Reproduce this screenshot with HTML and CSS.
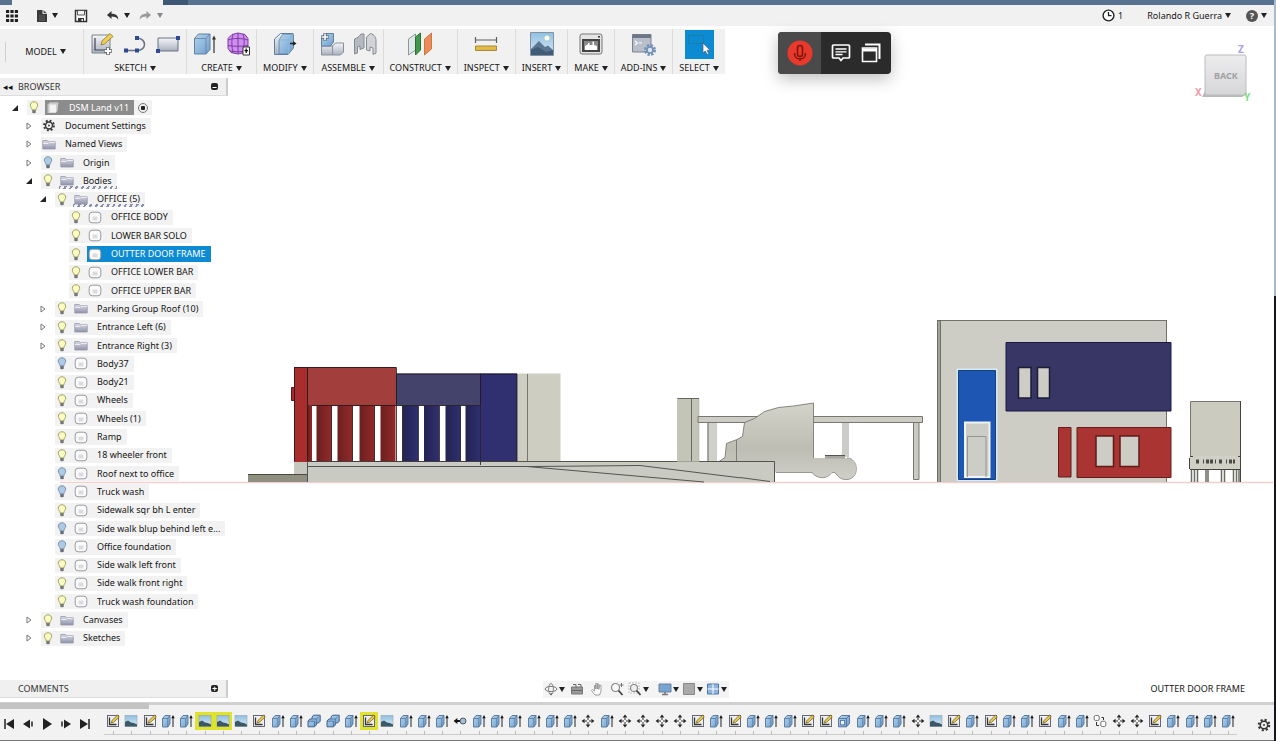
FILE: index.html
```html
<!DOCTYPE html>
<html lang="en">
<head>
    <meta charset="UTF-8">
    <title>DSM Land v11</title>
    <link rel="stylesheet" href="styles.css">
</head>
<body>
<!-- icon library -->
<svg class="defs" aria-hidden="true">
    <defs>
        <linearGradient id="gBlue" x1="0" y1="0" x2="1" y2="1"><stop offset="0" stop-color="#b5d5ee"/><stop offset="1" stop-color="#6d9fcd"/></linearGradient>
        <linearGradient id="gGray" x1="0" y1="0" x2="0" y2="1"><stop offset="0" stop-color="#f4f5f8"/><stop offset="1" stop-color="#a9b1bf"/></linearGradient>
        <linearGradient id="gFolder" x1="0" y1="0" x2="0" y2="1"><stop offset="0" stop-color="#dcdde6"/><stop offset="1" stop-color="#8f93a8"/></linearGradient>
        <linearGradient id="gSky" x1="0" y1="0" x2="0" y2="1"><stop offset="0" stop-color="#8fbfe2"/><stop offset="1" stop-color="#dcebf2"/></linearGradient>
        <linearGradient id="gRed" x1="0" y1="0" x2="1" y2="0"><stop offset="0" stop-color="#6d1f1f"/><stop offset="1" stop-color="#922a2a"/></linearGradient>
        <linearGradient id="gNavy" x1="0" y1="0" x2="1" y2="0"><stop offset="0" stop-color="#232354"/><stop offset="1" stop-color="#2f2f6e"/></linearGradient>
        <linearGradient id="gTruck" x1="0" y1="0" x2="0" y2="1"><stop offset="0" stop-color="#d3d3c9"/><stop offset="0.6" stop-color="#bdbdb4"/><stop offset="1" stop-color="#cfcfc8"/></linearGradient>
        <linearGradient id="gCube" x1="0" y1="0" x2="0" y2="1"><stop offset="0" stop-color="#ededee"/><stop offset="1" stop-color="#d6d6d9"/></linearGradient>
    </defs>
    <symbol id="bulb" viewBox="0 0 10 13">
        <path d="M5 .8C2.700.8 1.300 2.300 1.300 4.300c0 1.600 1.700 2.600 1.900 4.700h3.600c.2-2.100 1.900-3.100 1.900-4.700C8.700 2.300 7.300.8 5 .8z" fill="#fbfbc4" stroke="#98984e" stroke-width=".9"/>
        <path d="M3.300 9h3.400v2.200L5.700 12.300H4.300L3.300 11.200z" fill="#777"/>
    </symbol>
    <symbol id="bulb-off" viewBox="0 0 10 13">
        <path d="M5 .8C2.700.8 1.300 2.300 1.300 4.300c0 1.600 1.700 2.600 1.900 4.700h3.600c.2-2.100 1.900-3.100 1.900-4.700C8.700 2.300 7.300.8 5 .8z" fill="#aecbe6" stroke="#7288a3" stroke-width=".9"/>
        <path d="M3.300 9h3.400v2.200L5.700 12.300H4.300L3.300 11.200z" fill="#666f7c"/>
    </symbol>
    <symbol id="folder" viewBox="0 0 14 11">
        <path d="M.8 10V1.500h4.500l1 1.300h6.900V10z" fill="url(#gFolder)" stroke="#9497aa" stroke-width=".8"/>
        <path d="M1 4.500h5l1-1h6" stroke="#f5f5fa" stroke-width=".8" fill="none"/>
    </symbol>
    <symbol id="body" viewBox="0 0 14 13">
        <rect x="1.200" y="1.200" width="11.600" height="10.600" rx="3" fill="#fbfbfb" stroke="#8f8f96" stroke-width=".9"/>
        <path d="M4.500 5.500h5v4h-5z" fill="#dcdce0"/>
    </symbol>
    <symbol id="gear" viewBox="0 0 14 14">
        <circle cx="7" cy="7" r="5.300" fill="none" stroke="#333" stroke-width="2" stroke-dasharray="2.100 2.060"/>
        <circle cx="7" cy="7" r="3.700" fill="none" stroke="#333" stroke-width="1.500"/>
        <circle cx="7" cy="7" r="1" fill="#333"/>
    </symbol>
    <symbol id="cube" viewBox="0 0 14 13">
        <path d="M1.500 3.500L4 1.200h8.500L11.500 10 9.500 12h-8z" fill="#c9c9c9"/>
        <path d="M3.600 3.500h6.600v8H3.600z" fill="#f4f4f4"/>
    </symbol>
    <symbol id="t-sketch" viewBox="0 0 14 14">
        <rect x="1.500" y="1.500" width="11" height="11" fill="#eef0f3" stroke="#667" stroke-width="1"/>
        <path d="M3.500 3.500v7h7" fill="none" stroke="#333" stroke-width="1.300"/>
        <path d="M5 9l1-2.600L11.500 1.200l1.800 1.700-5.600 5.300z" fill="#e9c84a" stroke="#6e5a1c" stroke-width=".7"/>
    </symbol>
    <symbol id="t-image" viewBox="0 0 14 14">
        <rect x="1" y="1.500" width="12" height="11" fill="url(#gSky)" stroke="#93a4ac" stroke-width=".6"/>
        <path d="M1 8l3-1.500 3 2 3 .5 3 1.500v2H1z" fill="#3c5766"/>
    </symbol>
    <symbol id="t-extrude" viewBox="0 0 14 14">
        <path d="M1.500 4.500L4 1.500h5v8.500L6.800 13H1.500z" fill="url(#gBlue)" stroke="#54749b" stroke-width=".9"/>
        <path d="M1.500 4.500h5.300V13M6.800 4.500L9 1.500" stroke="#54749b" stroke-width=".8" fill="none"/>
        <path d="M12 13V4" stroke="#222" stroke-width="1"/><path d="M10.300 4.300L12 1l1.700 3.300z" fill="#111"/>
    </symbol>
    <symbol id="t-combine" viewBox="0 0 14 14">
        <path d="M5 3l1.500-1.800h6.700v6L11.500 9H9.300v2L7.500 12.800H1V7.200L2.800 5H5z" fill="url(#gBlue)" stroke="#3d618f" stroke-width="1"/>
        <path d="M5 5h4.300v4M1 7.200h6.500v5.600M9.300 5l2.200-2" stroke="#3d618f" stroke-width=".7" fill="none"/>
    </symbol>
    <symbol id="t-shell" viewBox="0 0 14 14">
        <path d="M1.500 4.500L4.500 1.500h8v8L9.500 12.800h-8z" fill="url(#gBlue)" stroke="#4d6f9c" stroke-width=".9"/>
        <path d="M1.500 4.500h8v8.300M9.500 4.500l3-3" stroke="#4d6f9c" stroke-width=".9" fill="none"/>
        <rect x="3.400" y="6.400" width="4.200" height="4.400" fill="#edf4fb" stroke="#4d6f9c" stroke-width=".8"/>
    </symbol>
    <symbol id="t-move" viewBox="0 0 14 14">
        <path d="M7 3.500v7M3.500 7h7" stroke="#333" stroke-width="1" stroke-dasharray="2.500 2"/>
        <path d="M7 .6l2.300 3H4.700zM7 13.400l2.300-3H4.700zM.6 7l3-2.300v4.600zM13.400 7l-3-2.300v4.600z" fill="#222"/>
    </symbol>
    <symbol id="t-joint" viewBox="0 0 14 14">
        <path d="M.6 7l3.800-3v2h3v2h-3v2z" fill="#111"/><circle cx="10" cy="7" r="3" fill="#a9bdd0" stroke="#3d4f60" stroke-width=".9"/>
    </symbol>
    <symbol id="t-copy" viewBox="0 0 14 14">
        <rect x="1.200" y="1.500" width="5" height="5" rx="1.500" fill="#fff" stroke="#666" stroke-width=".9"/>
        <rect x="7.800" y="7.300" width="5" height="5.200" rx="1.500" fill="#fff" stroke="#666" stroke-width=".9"/>
        <path d="M3.500 8v3.500H6M8.500 3.500h2v2.500" fill="none" stroke="#333" stroke-width="1"/>
    </symbol>
</svg>

<header>
    <div class="titlebar"><span class="tab"></span></div>
    <div class="quickbar">
        <button class="qb apps" aria-label="Data panel"><svg width="14" height="14" viewBox="0 0 14 14"><path d="M1 2.500h12M1 7h12M1 11.500h12" stroke="#222" stroke-width="3.200" stroke-dasharray="3.200 1.200"/></svg></button>
        <button class="qb file" aria-label="File"><svg width="12" height="14" viewBox="0 0 12 14"><path d="M1 1h5.500v4H11v8H1z" fill="#3a3a3a"/><path d="M7.500 1L11 4.200H7.500z" fill="#555"/><path d="M3 7h6M3 9.200h6M3 11.200h6" stroke="#777" stroke-width=".7"/></svg><i class="caret"></i></button>
        <button class="qb save" aria-label="Save"><svg width="14" height="14" viewBox="0 0 14 14"><path d="M1.500 1.500h11v11h-11z" fill="#fff" stroke="#333" stroke-width="1.500"/><path d="M3.500 1.500h7v4.500h-7z" fill="#f3f3f3" stroke="#444" stroke-width=".9"/><path d="M4 9h6v3.500H4z" fill="#333"/><path d="M7.500 10h1.500v2H7.500z" fill="#eee"/></svg></button>
        <button class="qb undo" aria-label="Undo"><svg width="13" height="12" viewBox="0 0 13 12"><path d="M1 5l4.500-4v2.700c4.500 0 6.800 2 6.800 6C11 7.500 9 6.500 5.500 6.500V9z" fill="#333"/></svg><i class="caret"></i></button>
        <button class="qb redo" aria-label="Redo"><svg width="13" height="12" viewBox="0 0 13 12"><path d="M12 5L7.500 1v2.700C3 3.700.7 5.700.7 9.700 2 7.500 4 6.500 7.500 6.500V9z" fill="#999"/></svg><i class="caret"></i></button>
        <button class="qb jobs" aria-label="Job status"><svg width="13" height="13" viewBox="0 0 13 13"><circle cx="6.500" cy="6.500" r="5.400" fill="#fff" stroke="#222" stroke-width="1.400"/><path d="M6.500 3v3.700H9.500" fill="none" stroke="#222" stroke-width="1.300"/></svg>1</button>
        <button class="qb user">Rolando R Guerra<i class="caret"></i></button>
        <button class="qb help" aria-label="Help"><span class="q">?</span><i class="caret"></i></button>
    </div>
</header>

<main class="workspace">
    <!-- model, seen from the back -->
    <svg class="model" viewBox="0 26 1276 676" aria-label="Model view">
        <path d="M60 482.500H1273" stroke="#f2cfcf" stroke-width="1.500"/>
        <!-- ramp and base -->
        <path d="M248 474h59v8h-59z" fill="#8f9080"/><path d="M248 474.500h59" stroke="#4a4a42"/>
        <path d="M294 461h14v13h-14z" fill="#c6c7be"/>
        <path d="M307.500 461.500H775v20.500H307.500z" fill="#c9cac1"/>
        <path d="M307.500 466.500H533M307.500 461v21" stroke="#55554f" fill="none"/>
        <path d="M517 461.500h258M774.500 461v21M527 466.500L704 482M533 466.500l107-1L770 481.500" stroke="#55554f" fill="none"/>
        <!-- left building -->
        <path d="M291.500 387.500h3v13h-3z" fill="#a52a2c" stroke="#561818"/>
        <path d="M294 367h102v39h-88v55h-14z" fill="#a23f3c"/>
        <path d="M294 367h14v95h-14z" fill="#a92d2d"/>
        <path d="M396 373.500h85v32h-85z" fill="#44436b"/>
        <path d="M517 373.500h43.500V461H517z" fill="#cdcdc2"/>
        <path d="M480.500 373.500H517V461h-36.500z" fill="#302f70"/>
        <g fill="url(#gRed)"><path d="M308 405h4v56h-4z"/><path d="M316.500 405.500h15V461h-15z"/><path d="M337.500 405.500h15V461h-15z"/><path d="M359.500 405.500h15V461h-15z"/><path d="M380.500 405.500h15V461h-15z"/></g>
        <g fill="url(#gNavy)"><path d="M402.500 405.500h15.500V461h-15.500z"/><path d="M424 405.500h15V461h-15z"/><path d="M445.500 405.500h15V461h-15z"/><path d="M465.500 405.500h15V461h-15z"/></g>
        <g stroke="#1e1518" stroke-width="1" fill="none" opacity=".8">
            <path d="M294 367.500h102.500V461M307.500 367.500V461M312 405.500h84M331.500 406v55M352.500 406v55M374.500 406v55M294.500 367v94"/>
            <path d="M397 374H517M397 405.500h84M402.500 406v55M418.500 406v55M439.500 406v55M460.500 406v55M480.500 374v91M517 374v87M308 461.500h209"/>
        </g>
        <path d="M527.500 374v87" stroke="#77776f"/>
        <!-- parking roof -->
        <path d="M677.500 398.500H699v63h-21.500z" fill="#c4c5b9" stroke="#b0b0a6" stroke-width=".6"/><path d="M677.500 398.500H699M691.500 399v62" stroke="#67675f" fill="none"/>
        <path d="M707.500 422h9.500v39h-9.500z" fill="#cfd0c9"/><path d="M708 422v39" stroke="#666"/>
        <path d="M842 422h7v35h-7z" fill="#cbccc5"/>
        <path d="M698 416.500h224.500v6H698z" fill="#cdcdc5" stroke="#77776f"/>
        <path d="M913.500 422.500h5.500v57h-5.500z" fill="#c9cac4" stroke="#77776f"/>
        <!-- truck -->
        <path d="M719 461.500l6-4 1.500-14 10.500-4 5.500-3 2-14 10-4 10-7 14-4 15-1.500 20-3V458h33c12 0 13 21 0 21.500-6 .500-9-3-12-7h-3c-5 7-14 7-20 0h-37v-11z" fill="url(#gTruck)"/>
        <path d="M719 461.500l6-4 1.500-14 10.500-4 5.500-3 2-14 10-4 10-7 14-4 15-1.500 20-3V458M736.500 440v21" fill="none" stroke="#6d6d66" stroke-width=".8"/>
        <path d="M847 458c12 0 13 21 0 21.500-6 .500-9-3-12-7h-3c-5 7-14 7-20 0h-36" fill="none" stroke="#85857e" stroke-width=".8"/>
        <path d="M825 455h20v3.500h-20z" fill="#a5a59e"/><path d="M825 455.500h20" stroke="#55554f"/>
        <path d="M740 461.500h35v20.500h-35z" fill="#c9cac1"/><path d="M719 461.500h55.500v20.500M740 477.500l30 4" stroke="#55554f" fill="none"/>
        <!-- office -->
        <path d="M937.500 320.500h229.500V482H937.500z" fill="#cdcdc5"/>
        <path d="M937.500 320h2.500v162h-2.500z" fill="#a3a39b"/>
        <path d="M937.500 320v162M940.500 320v162M1166.500 320v162M937 320.500h230" stroke="#65655f" stroke-width=".9"/>
        <path d="M957.500 369.500h39V480h-39z" fill="#1d57b3" stroke="#d8e9fb" stroke-width="2"/>
        <path d="M958.500 370.500h37v109h-37z" fill="none" stroke="#15417f" stroke-width="1"/>
        <path d="M965 422.500h24.500V477H965z" fill="#cdcdc8" stroke="#eef4f8" stroke-width="2"/>
        <path d="M967.500 477v-40.500h18.500V477" fill="none" stroke="#96968e"/>
        <path d="M1006 342.500h165V411h-165z" fill="#373664" stroke="#191944"/>
        <path d="M1018.500 367.500H1031V398h-12.500zM1037.500 367.500h12V398h-12z" fill="#cdcdc5" stroke="#1d1c36" stroke-width="1.500"/>
        <path d="M1058.500 427.500h12.500V477h-12.500zM1077 427.500h94V477.500h-94z" fill="#a93431" stroke="#651d1d"/>
        <path d="M1096 436h17.500v30.500H1096zM1120 436h19v30.500h-19z" fill="#cdcdc5" stroke="#5c1b1b" stroke-width="1.500"/>
        <!-- trailer -->
        <path d="M1190.500 401.500h50V469h-50z" fill="#cbcbc0" stroke="#77776f"/>
        <path d="M1190 456h51v13h-51z" fill="#d0d0c7"/>
        <path d="M1240.500 401v81M1190 456.500h3M1238 456.500h3M1190 469.500h50M1189.500 458v11" stroke="#44443e"/>
        <path d="M1196 461.500h39" stroke="#4a4a44" stroke-width="4" stroke-dasharray="3 4 1 2 3 1 3 2 1 3"/>
        <path d="M1191.500 470v12M1194.500 470v12M1197.500 470v12M1206 470v12M1208 470v12M1221.500 470v12M1224.500 470v12M1233.500 470v12M1236.500 470v12M1239 470v12" stroke="#6b6b64" stroke-width="1.500"/>
    </svg>

    <nav class="toolbar">
        <button class="group mode">MODEL<i class="caret"></i></button>
        <button class="group">
            <span class="pics">
                <svg width="24" height="24" viewBox="0 0 24 24"><path d="M2 3h18v18H2z" fill="url(#gGray)" stroke="#788" stroke-width="1"/><path d="M5 6v12h12" fill="none" stroke="#445" stroke-width="1.200"/><path d="M11 13l1-4 8-7.500 3 3-8.500 7.500z" fill="#f0cf53" stroke="#8a7430" stroke-width=".8"/><path d="M18 15v8M14 19h8" stroke="#667" stroke-width="3.600"/><path d="M18 15.700v6.600M14.700 19h6.600" stroke="#fff" stroke-width="2"/></svg>
                <svg width="24" height="24" viewBox="0 0 24 24"><path d="M3 18.500h11c10 0 10-12 0-12.500" fill="none" stroke="#6a7080" stroke-width="1.500"/><path d="M1 16.500h4v4H1zM12 16.500h4v4h-4zM12 4h4v4h-4z" fill="#2d4a93"/></svg>
                <svg width="24" height="24" viewBox="0 0 24 24"><path d="M2 6h20v13H2z" fill="url(#gGray)" stroke="#6b7384"/><path d="M20 4h4v4h-4zM0 17h4v4H0z" fill="#2d4a93"/></svg>
            </span>
            <span>SKETCH<i class="caret"></i></span>
        </button>
        <button class="group">
            <span class="pics">
                <svg width="24" height="24" viewBox="0 0 24 24"><path d="M1.500 6.500l4-4.500H17v15.500L13 22H1.500z" fill="url(#gBlue)" stroke="#62809f"/><path d="M1.500 6.500H13V22M13 6.500L17 2" fill="none" stroke="#62809f" stroke-width=".8"/><path d="M21 21V7" stroke="#333" stroke-width="1.200"/><path d="M19 7.500l2-4 2 4z" fill="#333"/></svg>
                <svg width="24" height="24" viewBox="0 0 24 24"><path d="M6 2.500L12 1l7 1.500 3 4v10l-3 4-7 1.500-7-1.500-3-4v-10z" fill="#d18cf0" stroke="#7a3da6"/><path d="M2 8c6-2 14-2 20 0M2 13.500c6 1 14 1 20 0M4 19c5 1 11 1 16 0M7 2.500c-2 6-1 13 0 18.500M12 1v21M17 2c2 6 1 13 0 19" fill="none" stroke="#7a3da6"/><path d="M17 15h6.500v8H17z" fill="#fff" stroke="#333"/><path d="M20.200 16.500v4.500M18.500 18.700H22" stroke="#111" stroke-width="1.300"/></svg>
            </span>
            <span>CREATE<i class="caret"></i></span>
        </button>
        <button class="group">
            <span class="pics"><svg width="24" height="24" viewBox="0 0 24 24"><path d="M1.500 7l6-5.500H20V16l-5 6.500H1.500z" fill="url(#gGray)" stroke="#5f7f9f"/><path d="M6 8l4-6h10.500v14l-5 6H6z" fill="url(#gBlue)" stroke="#5f7f9f" stroke-width=".8"/><path d="M6 8h9.500v14M15.500 8l5-6" fill="none" stroke="#8db3d6"/><path d="M17 11.500h4" stroke="#222" stroke-width="1.500"/><path d="M20 9l3.500 2.500L20 14z" fill="#222"/></svg></span>
            <span>MODIFY<i class="caret"></i></span>
        </button>
        <button class="group">
            <span class="pics">
                <svg width="24" height="24" viewBox="0 0 24 24"><path d="M1.500 14h11v9h-11zM12.500 14l3-3H23.500v9l-3 3h-8z" fill="url(#gGray)" stroke="#8a8f99"/><path d="M1.500 5.500L5 1.500h8.500V10l-3 4h-9z" fill="url(#gBlue)" stroke="#62809f"/><path d="M5 1v8M1 5h8" stroke="#456" stroke-width="3"/><path d="M5 1.500v7M1.500 5h7" stroke="#fff" stroke-width="1.600"/></svg>
                <svg width="24" height="24" viewBox="0 0 24 24"><path d="M1.500 7C4 6 6 5 8 2h3v14l-4 1.500V14L4.500 15v6l-3 1z" fill="#b5bac1" stroke="#858b92"/><path d="M13.500 5l4-3.500c4 1 5.500 4 5.500 7V21l-3 1.500V16l-3-1v4l-3.500-1z" fill="#d0d3d8" stroke="#858b92"/></svg>
            </span>
            <span>ASSEMBLE<i class="caret"></i></span>
        </button>
        <button class="group">
            <span class="pics"><svg width="26" height="24" viewBox="0 0 26 24"><path d="M1.500 7l7-5v16l-7 5z" fill="#e3e7e7" stroke="#899"/><path d="M8.500 5l5-4v17l-5 5z" fill="#3f9a49" stroke="#2b6e37"/><path d="M17.500 7L24.500 1v16l-7 6z" fill="#ec8d58" stroke="#cc7748"/></svg></span>
            <span>CONSTRUCT<i class="caret"></i></span>
        </button>
        <button class="group">
            <span class="pics"><svg width="24" height="24" viewBox="0 0 24 24"><path d="M1.500 5v6M22.500 5v6M2 8h20" stroke="#5a5f66" stroke-width="1.200"/><path d="M1.500 14h21v4.500h-21z" fill="#e0bb45" stroke="#a68a35"/></svg></span>
            <span>INSPECT<i class="caret"></i></span>
        </button>
        <button class="group">
            <span class="pics"><svg width="24" height="24" viewBox="0 0 24 24"><path d="M.500.500h23v23H.500z" fill="url(#gSky)" stroke="#8193a2"/><circle cx="17" cy="6" r="2.500" fill="#fdfbdc"/><path d="M1 17l8-8 6 6 3-1.500L23 18v5H1z" fill="#5b7690"/><path d="M1 18l7-3 8 5 7-2v5H1z" fill="#415c77"/></svg></span>
            <span>INSERT<i class="caret"></i></span>
        </button>
        <button class="group">
            <span class="pics"><svg width="24" height="24" viewBox="0 0 24 24"><rect x="1" y="2" width="22" height="20" rx="2" fill="#e5e5e5" stroke="#777"/><path d="M3 7h18v13H3z" fill="#444"/><path d="M5 9h14v9H5z" fill="#888"/><path d="M6 18v-4l3-2v-1h1.500v2h3V9.500H15V13l3 1v4z" fill="#fff"/><path d="M19 4h2v1.500h-2z" fill="#333"/></svg></span>
            <span>MAKE<i class="caret"></i></span>
        </button>
        <button class="group">
            <span class="pics"><svg width="26" height="24" viewBox="0 0 26 24"><path d="M1.500 2.500H20V20H1.500z" fill="#b9bfca" stroke="#7b8290"/><path d="M1.500 2.500H20V6H1.500z" fill="#6e7686"/><path d="M4 9l2.500 2L4 13M8 11h3" fill="none" stroke="#fff" stroke-width="1.200"/><circle cx="19" cy="18" r="4.500" fill="none" stroke="#7291b5" stroke-width="3" stroke-dasharray="2.200 1.340"/><circle cx="19" cy="18" r="3" fill="#dbe6f2" stroke="#7291b5" stroke-width="1.600"/></svg></span>
            <span>ADD-INS<i class="caret"></i></span>
        </button>
        <button class="group select">
            <span class="pics"><svg width="29" height="29" viewBox="0 0 29 29"><path d="M0 0h29v29H0z" fill="#0c8bd3"/><path d="M3.500 5.500h15v8h-15z" fill="none" stroke="#1b7d9b" stroke-dasharray="3 1"/><path d="M18 13v10l2.300-2 1.800 3.500 1.600-.8-1.700-3.400h3z" fill="#fff" stroke="#557" stroke-width=".7"/></svg></span>
            <span>SELECT<i class="caret"></i></span>
        </button>
    </nav>

    <section class="browser">
        <div class="panel-head"><span class="fold">◂◂</span>BROWSER<button class="pin" aria-label="Collapse">–</button></div>
        <ul class="tree" id="tree"></ul>
    </section>

    <div class="recorder">
        <button class="mic" aria-label="Microphone"><svg width="26" height="26" viewBox="0 0 26 26"><circle cx="13" cy="13" r="12.500" fill="#e8392b"/><rect x="10.500" y="5.500" width="5" height="11" rx="2.500" fill="none" stroke="#7a1710" stroke-width="1.500"/><path d="M7.500 13c0 8 11 8 11 0M13 19v2" fill="none" stroke="#7a1710" stroke-width="1.500"/></svg></button>
        <button aria-label="Notes"><svg width="20" height="20" viewBox="0 0 20 20"><path d="M2.500 2h15q1 0 1 1v11q0 1-1 1H12l-2 2.500L8 15H2.500q-1 0-1-1V3q0-1 1-1z" fill="none" stroke="#fff" stroke-width="1.700"/><path d="M4.500 6h11M4.500 8.800h11M4.500 11.500h7" stroke="#fff" stroke-width="1.300"/></svg></button>
        <button aria-label="Windows"><svg width="20" height="20" viewBox="0 0 20 20"><path d="M1.500 5h14v13.500h-14z" fill="none" stroke="#fff" stroke-width="1.600"/><path d="M1.500 7h14" stroke="#fff" stroke-width="3"/><path d="M4 1.500h14.500V16" fill="none" stroke="#fff" stroke-width="2"/></svg></button>
    </div>

    <svg class="viewcube" width="60" height="62" viewBox="0 0 60 62">
        <path d="M8 55h40l5-3-2-5H12z" fill="#b9b9bb"/>
        <rect x="11" y="13" width="41" height="40" rx="2" fill="url(#gCube)" stroke="#bcbcc0"/>
        <text x="20" y="37" class="face">BACK</text>
        <text x="44" y="11" class="axis" fill="#a4a3e0">Z</text>
        <text x="1" y="54" class="axis" fill="#ee9db0">X</text>
        <text x="50" y="59" class="axis" fill="#7be08a">Y</text>
    </svg>

    <footer class="dock">
        <div class="panel-head comments">COMMENTS<button class="pin" aria-label="Expand">+</button></div>
        <div class="viewbar">
            <button aria-label="Orbit"><svg width="14" height="14" viewBox="0 0 14 14"><ellipse cx="7" cy="7" rx="5.800" ry="2.600" fill="none" stroke="#777"/><ellipse cx="7" cy="7" rx="2.400" ry="5.500" fill="none" stroke="#888"/><path d="M5.500 11.500h3L7 13.500z" fill="#555"/></svg><i class="caret"></i></button>
            <button aria-label="Look at"><svg width="14" height="14" viewBox="0 0 14 14"><path d="M1.500 5h11v7h-11z" fill="#999" stroke="#777"/><path d="M3 2.500h3V5M8 2.500h3V5M2 8.500h10" stroke="#666" fill="none"/></svg></button>
            <button aria-label="Pan"><svg width="14" height="14" viewBox="0 0 14 14"><path d="M5 13L1.500 8.500 2.500 7.500 4.500 9V3.500h1.300V7 1.500h1.400V7l.3-5h1.300v5.300l.7-4H11v6l-1.500 3.700z" fill="#fdfdfd" stroke="#888" stroke-width=".8"/></svg></button>
            <button aria-label="Zoom"><svg width="14" height="14" viewBox="0 0 14 14"><circle cx="5.500" cy="5.500" r="4" fill="#f8f8f8" stroke="#888" stroke-width="1.200"/><path d="M8.500 8.500L12.500 13" stroke="#444" stroke-width="1.800"/><path d="M11.500 1v4M9.500 3h4" stroke="#777"/></svg></button>
            <button aria-label="Fit"><svg width="14" height="14" viewBox="0 0 14 14"><path d="M1 1h10v10H1z" fill="#fff" stroke="#bbb" stroke-dasharray="2 1"/><circle cx="6" cy="6" r="3.500" fill="#f0f0f0" stroke="#888" stroke-width="1.200"/><path d="M8.500 8.500L12.500 13" stroke="#444" stroke-width="1.800"/></svg><i class="caret"></i></button>
            <button class="gap" aria-label="Display"><svg width="14" height="14" viewBox="0 0 14 14"><path d="M1 2h12v8H1z" fill="#76a4d4" stroke="#6c7f96"/><path d="M4 12.500h6M7 10v2" stroke="#777" stroke-width="1.500"/></svg><i class="caret"></i></button>
            <button aria-label="Grid"><svg width="14" height="14" viewBox="0 0 14 14"><path d="M1.500 1.500h11v11h-11z" fill="#aaa" stroke="#888"/></svg><i class="caret"></i></button>
            <button aria-label="Viewports"><svg width="14" height="14" viewBox="0 0 14 14"><path d="M1.500 2h11v10h-11z" fill="#8fb6df" stroke="#4d77ab"/><path d="M7 2v10M1.500 7h11" stroke="#fff"/></svg><i class="caret"></i></button>
        </div>
        <div class="status">OUTTER DOOR FRAME</div>
    </footer>
</main>

<section class="timeline">
    <div class="scroll"></div>
    <div class="player">
        <button aria-label="First"><svg width="12" height="12" viewBox="0 0 12 12"><path d="M2 1v10" stroke="#222" stroke-width="1.500"/><path d="M11 1v10L3 6z" fill="#222"/></svg></button>
        <button aria-label="Back"><svg width="12" height="12" viewBox="0 0 12 12"><path d="M8 1.500v9L1 6z" fill="#222"/><path d="M10 3.500v5" stroke="#222" stroke-width="1.500"/></svg></button>
        <button aria-label="Play"><svg width="12" height="12" viewBox="0 0 12 12"><path d="M2 0v12l9-6z" fill="#222"/></svg></button>
        <button aria-label="Forward"><svg width="12" height="12" viewBox="0 0 12 12"><path d="M4 1.500v9L11 6z" fill="#222"/><path d="M2 3.500v5" stroke="#222" stroke-width="1.500"/></svg></button>
        <button aria-label="Last"><svg width="12" height="12" viewBox="0 0 12 12"><path d="M10 1v10" stroke="#222" stroke-width="1.500"/><path d="M1 1v10l8-5z" fill="#222"/></svg></button>
    </div>
    <ol class="steps" id="steps"></ol>
    <button class="settings" aria-label="Timeline settings"><svg width="14" height="14"><use href="#gear"/></svg></button>
</section>
<script src="script.js"></script>
</body>
</html>
```
FILE: styles.css
```css
*{
    margin: 0;
    padding: 0;
    box-sizing: border-box;
    list-style: none;
}

body{
    display: flex;
    flex-direction: column;
    min-height: 100vh;
    background-color: #fff;
    color: #151515;
    font-family: "Noto Sans", "Open Sans", sans-serif;
    font-size: 9px;
    line-height: 12px;
}

/* edge of the window */
body::after{
    content: "";
    position: fixed;
    top: 0;
    right: 0;
    width: 2px;
    height: 100%;
    background: linear-gradient(#a9b8ca 40%, #15151c 40%);
}

button{
    border: 0;
    background: none;
    color: inherit;
    font: inherit;
}

svg{
    display: block;
    flex: none;
}

.defs{
    position: absolute;
    width: 0;
    height: 0;
}

.caret{
    display: inline-block;
    margin-left: 3px;
    border: 3px solid transparent;
    border-top: 5px solid #222;
    border-bottom: 0;
}

/* top bars */
.titlebar{
    height: 5px;
    padding-left: 12px;
    background-color: #56728f;
}

.tab{
    display: block;
    width: 151px;
    height: 5px;
    background-color: #f1f1f1;
    box-shadow: 25px 0 #3d5874;
}

.quickbar{
    display: flex;
    align-items: center;
    height: 21px;
    padding: 0 9px 0 5px;
    background-color: #f1f1f1;
}

.qb{
    display: flex;
    align-items: center;
    height: 20px;
}

.file{
    margin-left: 17px;
}

.file .caret{
    margin-left: 4px;
}

.save{
    margin-left: 16px;
}

.undo{
    margin-left: 18px;
}

.undo .caret, .redo .caret{
    margin-left: 5px;
}

.redo{
    margin-left: 9px;
}

.redo .caret{
    border-top-color: #888;
}

.jobs{
    gap: 3px;
    margin-left: auto;
}

.user{
    margin-left: 24px;
}

.help{
    margin-left: 15px;
}

.q{
    width: 12px;
    height: 12px;
    border-radius: 50%;
    background-color: #555;
    color: #fff;
    font-weight: bold;
}

/* workspace */
.workspace{
    position: relative;
    display: flex;
    flex: 1;
    flex-direction: column;
    align-items: flex-start;
    padding-top: 3px;
}

.model{
    position: absolute;
    top: 0;
    left: 0;
    width: 100%;
    height: 100%;
}

.toolbar{
    position: relative;
    display: flex;
    height: 45px;
    background-color: #f1f1f1;
}

.group{
    display: flex;
    flex-direction: column;
    align-items: center;
    justify-content: space-between;
    padding: 3px 6px 0;
    border-left: 1px solid #dcdcdc;
    white-space: nowrap;
}

.group.mode{
    flex-direction: row;
    justify-content: center;
    width: 83px;
    padding: 0 0 0 8px;
    border-left: 0;
    background: linear-gradient(#cfcfcf, #cfcfcf) 5px center / 1px 20px no-repeat;
}

.pics{
    display: flex;
    align-items: center;
    gap: 9px;
    height: 24px;
}

.panel-head{
    display: flex;
    align-items: center;
    width: 228px;
    height: 18px;
    padding: 0 8px 0 3px;
    border-right: 2px solid #ccc;
    border-bottom: 1px solid #ddd;
    background-color: #f0f0f0;
    color: #333;
}

.fold{
    width: 15px;
    color: #111;
}

.pin{
    width: 7px;
    height: 7px;
    margin-left: auto;
    border-radius: 2px;
    background-color: #222;
    color: #fff;
    font-weight: bold;
    line-height: 7px;
}

.browser{
    position: relative;
    margin: 4px 0 auto;
}

/* browser tree */
.tree{
    display: grid;
    grid-auto-rows: 1fr;
    row-gap: 3px;
    height: 546px;
    margin-top: 4px;
}

.tree li{
    display: flex;
    align-items: stretch;
    padding-left: 8px;
    white-space: nowrap;
}

.tree .d1{
    padding-left: 22px;
}

.tree .d2{
    padding-left: 36px;
}

.tree .d3{
    padding-left: 50px;
}

.toggle{
    width: 19px;
    padding-left: 3px;
}

.chip{
    display: flex;
    background-color: #f2f2f2;
}

.light{
    display: flex;
    align-items: center;
    width: 18px;
    padding-left: 2px;
}

.name{
    position: relative;
    display: flex;
    align-items: center;
    gap: 8px;
    padding-right: 5px;
}

.name svg{
    width: 16px;
}

.root .name{
    background-color: #8c8c8c;
    color: #fff;
}

.root input{
    appearance: none;
    align-self: center;
    width: 10px;
    height: 10px;
    margin: 0 4px;
    border: 1px solid #777;
    border-radius: 50%;
    background: radial-gradient(#222 35%, #eee 45%);
}

.selected .name{
    background-color: #0d8bd2;
    color: #fff;
}

.marked .name::after{
    content: "";
    position: absolute;
    bottom: 0;
    left: 0;
    width: 100%;
    height: 3px;
    background: repeating-linear-gradient(120deg, #8a90a8 0 2px, transparent 2px 5px);
}

/* floating parts */
.recorder{
    position: absolute;
    top: 6px;
    left: 61%;
    display: flex;
    align-items: center;
    width: 113px;
    height: 42px;
    overflow: hidden;
    border-radius: 4px;
    background-color: #2b2b2b;
    box-shadow: 0 5px 16px rgba(0, 0, 0, .25);
}

.recorder button{
    margin-left: 10px;
}

.recorder .mic{
    width: 43px;
    height: 42px;
    margin: 0;
    padding-left: 9px;
    background-color: #4a4a4a;
}

.viewcube{
    position: absolute;
    top: 16px;
    right: 22px;
}

.face{
    fill: #a0a0a6;
    font-size: 9px;
    font-weight: bold;
}

.axis{
    font-size: 10px;
    font-weight: bold;
}

.dock{
    position: relative;
    display: grid;
    grid-template-columns: 228px 1fr 232px;
    align-items: center;
    width: 100%;
    margin-bottom: 4px;
}

.comments{
    padding-left: 18px;
}

.viewbar{
    display: flex;
    align-items: center;
    justify-self: center;
    height: 17px;
    background-color: #f4f4f4;
}

.viewbar button{
    display: flex;
    align-items: center;
    padding: 0 2px 0 1px;
}

.viewbar button:nth-child(2), .viewbar button:nth-child(3), .viewbar button:nth-child(4){
    padding: 0 3px;
}

.viewbar .gap{
    margin-left: 6px;
}

.viewbar .caret{
    margin-left: 1px;
}

.status{
    padding-right: 31px;
    text-align: right;
}

/* timeline */
.timeline{
    position: relative;
    display: flex;
    height: 39px;
    padding: 7px 5px 0 3px;
    border-top: 3px solid #d0d0d0;
    border-bottom: 1px solid #777;
    background-color: #f2f2f2;
}

.scroll{
    position: absolute;
    top: -2px;
    left: 0;
    width: 149px;
    height: 6px;
    background-color: #c3c3c3;
}

.player{
    display: flex;
    gap: 7px;
    width: 101px;
    height: 20px;
    padding-top: 6px;
}

.player button{
    height: 12px;
}

.steps{
    display: flex;
    flex: 1;
    height: 23px;
    border-bottom: 1px solid #ccc;
}

.steps li{
    position: relative;
    display: flex;
    flex: 1;
    justify-content: center;
    height: 18px;
    padding-top: 2px;
}

.steps li::after{
    content: "";
    position: absolute;
    top: 19px;
    left: 50%;
    width: 1px;
    height: 4px;
    background-color: #bbb;
}

.steps .hot{
    background-color: #dfe32c;
}

.settings{
    height: 14px;
    margin: 6px 0 0 20px;
}
```
FILE: script.js
```js
// depth, arrow (o open, c closed, - none), light (1 on, 0 off, - none), icon, text, class
var rows = [
    [0, "o", "1", "cube", "DSM Land v11", "root"],
    [1, "c", "-", "gear", "Document Settings"],
    [1, "c", "-", "folder", "Named Views"],
    [1, "c", "0", "folder", "Origin"],
    [1, "o", "1", "folder", "Bodies", "marked"],
    [2, "o", "1", "folder", "OFFICE (5)", "marked"],
    [3, "-", "1", "body", "OFFICE BODY"],
    [3, "-", "1", "body", "LOWER BAR SOLO"],
    [3, "-", "1", "body", "OUTTER DOOR FRAME", "selected"],
    [3, "-", "1", "body", "OFFICE LOWER BAR"],
    [3, "-", "1", "body", "OFFICE UPPER BAR"],
    [2, "c", "1", "folder", "Parking Group Roof (10)"],
    [2, "c", "1", "folder", "Entrance Left (6)"],
    [2, "c", "1", "folder", "Entrance Right (3)"],
    [2, "-", "0", "body", "Body37"],
    [2, "-", "1", "body", "Body21"],
    [2, "-", "1", "body", "Wheels"],
    [2, "-", "1", "body", "Wheels (1)"],
    [2, "-", "1", "body", "Ramp"],
    [2, "-", "1", "body", "18 wheeler front"],
    [2, "-", "0", "body", "Roof next to office"],
    [2, "-", "0", "body", "Truck wash"],
    [2, "-", "1", "body", "Sidewalk sqr bh L enter"],
    [2, "-", "0", "body", "Side walk blup behind left e..."],
    [2, "-", "0", "body", "Office foundation"],
    [2, "-", "1", "body", "Side walk left front"],
    [2, "-", "1", "body", "Side walk front right"],
    [2, "-", "1", "body", "Truck wash foundation"],
    [1, "c", "1", "folder", "Canvases"],
    [1, "c", "1", "folder", "Sketches"]
];

var arrows = {
    o: '<svg width="8" height="8" viewBox="0 0 8 8"><path d="M7 1v6H1z" fill="#222"/></svg>',
    c: '<svg width="8" height="8" viewBox="0 0 8 8"><path d="M2 1l4 3-4 3z" fill="#fff" stroke="#777"/></svg>'
};

function icon(id, w, h) {
    return '<svg width="' + w + '" height="' + h + '"><use href="#' + id + '"/></svg>';
}

var tree = document.getElementById("tree");
for (var i = 0; i < rows.length; i++) {
    var r = rows[i];
    var li = document.createElement("li");
    li.className = "d" + r[0] + (r[5] ? " " + r[5] : "");
    var html = r[1] == "-" ? '<span class="toggle"></span>' : '<button class="toggle" aria-label="Toggle ' + r[4] + '">' + arrows[r[1]] + '</button>';
    html += '<div class="chip">';
    if (r[2] != "-") {
        html += '<button class="light" aria-label="Show ' + r[4] + '">' + icon(r[2] == "1" ? "bulb" : "bulb-off", 10, 13) + '</button>';
    }
    html += '<span class="name">' + icon(r[3], 14, r[3] == "folder" ? 11 : 13) + r[4] + '</span>';
    if (r[5] == "root") {
        html += '<input type="radio" checked aria-label="Activate ' + r[4] + '">';
    }
    li.innerHTML = html + '</div>';
    tree.appendChild(li);
}

// s sketch, i image, e extrude, c combine, h shell, m move, j joint, p copy; capital = highlighted
var names = {s: "sketch", i: "image", e: "extrude", c: "combine", h: "shell", m: "move", j: "joint", p: "copy"};
var features = "siseeIIiseecceSieeejeeeeee" + "memmmm" + "seseeessheeemiseseeseepmmseeee";
var steps = document.getElementById("steps");
for (var i = 0; i < features.length; i++) {
    var key = features.charAt(i);
    var step = document.createElement("li");
    if (key != key.toLowerCase()) {
        step.className = "hot";
    }
    step.innerHTML = icon("t-" + names[key.toLowerCase()], 14, 14);
    steps.appendChild(step);
}
```
